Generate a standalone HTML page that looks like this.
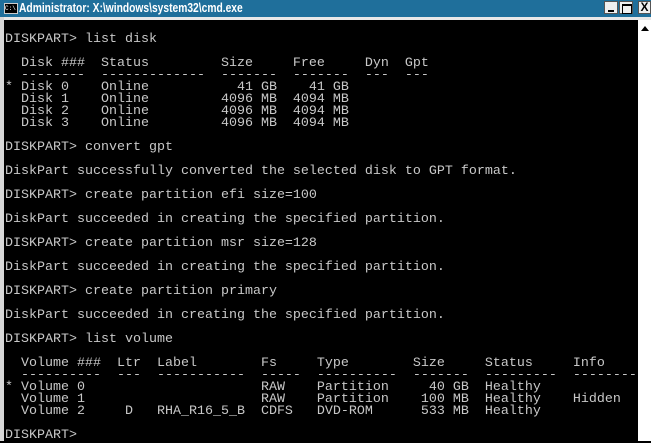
<!DOCTYPE html>
<html><head><meta charset="utf-8"><style>
html,body{margin:0;padding:0;width:651px;height:441px;overflow:hidden;background:#000}
#title{position:absolute;left:0;top:0;width:651px;height:17px;background:#1f6f9b;}
#title .t{position:absolute;left:19px;top:0px;color:#fff;font:bold 13px "Liberation Sans",sans-serif;line-height:16px;transform:scaleX(0.79);transform-origin:0 0;white-space:nowrap}
#icon{position:absolute;left:4px;top:3px;width:12px;height:9px;background:#000;border:1px solid #ccc;color:#fff;font:6px "Liberation Mono",monospace;line-height:9px}
.btn{position:absolute;top:1px;width:14px;height:13px;background:#f0f0f0;border:1px solid #555;box-sizing:border-box}
#sep{position:absolute;left:0;top:17px;width:651px;height:3px;background:#e8e8e8}
#lb{position:absolute;left:0;top:17px;width:4px;height:424px;background:#d8d8d8}
#sb{position:absolute;left:638px;top:20px;width:13px;height:421px;background:#fff}
#con{position:absolute;left:5px;top:22px;margin:0;color:#c8c8c8;font-family:"Liberation Mono",monospace;font-size:13.33px;line-height:12px;white-space:pre}
</style></head><body>
<div id="title"><div id="icon">C:\</div><div class="t">Administrator: X:\windows\system32\cmd.exe</div>
<div class="btn" style="left:604px"><div style="position:absolute;left:3px;top:8px;width:6px;height:2px;background:#000"></div></div>
<div class="btn" style="left:619px"><div style="position:absolute;left:2px;top:2px;width:8px;height:7px;border:1px solid #000;border-top-width:2px"></div></div>
<div class="btn" style="left:638px;width:13px;font:bold 12px 'Liberation Sans',sans-serif;text-align:center;line-height:11px">X</div>
</div>
<div id="sep"></div><div id="lb"></div>
<div id="sb"><div style="position:absolute;left:3px;top:6px;width:0;height:0;border-left:4px solid transparent;border-right:4px solid transparent;border-bottom:5px solid #000"></div></div>
<pre id="con">

DISKPART&gt; list disk

  Disk ###  Status         Size     Free     Dyn  Gpt
  --------  -------------  -------  -------  ---  ---
* Disk 0    Online           41 GB    41 GB
  Disk 1    Online         4096 MB  4094 MB
  Disk 2    Online         4096 MB  4094 MB
  Disk 3    Online         4096 MB  4094 MB

DISKPART&gt; convert gpt

DiskPart successfully converted the selected disk to GPT format.

DISKPART&gt; create partition efi size=100

DiskPart succeeded in creating the specified partition.

DISKPART&gt; create partition msr size=128

DiskPart succeeded in creating the specified partition.

DISKPART&gt; create partition primary

DiskPart succeeded in creating the specified partition.

DISKPART&gt; list volume

  Volume ###  Ltr  Label        Fs     Type        Size     Status     Info
  ----------  ---  -----------  -----  ----------  -------  ---------  --------
* Volume 0                      RAW    Partition     40 GB  Healthy
  Volume 1                      RAW    Partition    100 MB  Healthy    Hidden
  Volume 2     D   RHA_R16_5_B  CDFS   DVD-ROM      533 MB  Healthy

DISKPART&gt;</pre>
</body></html>
